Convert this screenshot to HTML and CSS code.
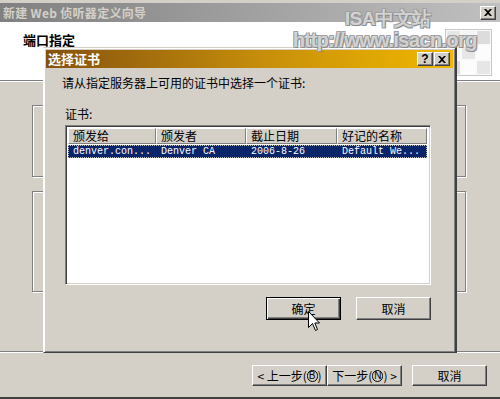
FILE: index.html
```html
<!DOCTYPE html>
<html>
<head>
<meta charset="utf-8">
<link rel="stylesheet" href="styles.css">
</head>
<body>
<div class="window">
  <div class="titlebar">
    <span class="title-text">新建 Web 侦听器定义向导</span>
    <span class="tbtn tbtn-x">
      <svg width="8" height="7" viewBox="0 0 8 7"><path d="M0 0h2l2 2 2-2h2L5 3.5 8 7H6L4 5 2 7H0l3-3.5z" fill="#000"/></svg>
    </span>
  </div>
  <div class="header">
    <div class="header-title">端口指定</div>
    <div class="header-icon">
      <div class="cell c1"></div><div class="cell c2"></div><div class="cell c3"></div>
      <div class="cell c2"></div><div class="cell c1"></div><div class="cell c4"></div>
      <div class="cell c3"></div><div class="cell c4"></div><div class="cell c1"></div>
    </div>
  </div>
  <div class="body">
    <div class="group g1"></div>
    <div class="group g2"></div>
  </div>
  <div class="separator"></div>
  <div class="footer">
    <div class="btn btn-nav">&lt;&nbsp;上一步(<u>B</u>)</div>
    <div class="btn btn-nav">下一步(<u>N</u>)&nbsp;&gt;</div>
    <div class="btn btn-cancel">取消</div>
  </div>

  <div class="watermark">
    <div class="wm1">ISA中文站</div>
    <div class="wm2">http://www.isacn.org</div>
  </div>

  <div class="dialog">
    <div class="dtitle">
      <span class="dtitle-text">选择证书</span>
      <span class="dbtns">
        <span class="tbtn tbtn-q">?</span>
        <span class="tbtn">
          <svg width="8" height="7" viewBox="0 0 8 7"><path d="M0 0h2l2 2 2-2h2L5 3.5 8 7H6L4 5 2 7H0l3-3.5z" fill="#000"/></svg>
        </span>
      </span>
    </div>
    <div class="dbody">
      <div class="prompt">请从指定服务器上可用的证书中选择一个证书:</div>
      <div class="label">证书:</div>
      <div class="listview">
        <div class="lv-head">
          <div class="col col1">颁发给</div>
          <div class="col col2">颁发者</div>
          <div class="col col3">截止日期</div>
          <div class="col col4">好记的名称</div>
        </div>
        <div class="lv-row">
          <div class="cell1">denver.con...</div>
          <div class="cell2">Denver CA</div>
          <div class="cell3">2006-8-26</div>
          <div class="cell4">Default We...</div>
        </div>
      </div>
      <div class="dbuttons">
        <div class="btn btn-default"><span>确定</span></div>
        <div class="btn btn-dlg">取消</div>
      </div>
    </div>
  </div>

  <svg class="cursor" width="13" height="21" viewBox="0 0 13 21">
    <path d="M0.5 0.5V16.5L4.5 12.5L7.5 19.5L9.5 18.5L6.8 12H11.5Z" fill="#fff" stroke="#000" stroke-width="1"/>
  </svg>
</div>
</body>
</html>
```

FILE: styles.css
```css
* { box-sizing: border-box; }
html, body { margin: 0; padding: 0; }
body {
  width: 500px;
  height: 399px;
  overflow: hidden;
  background: #d4d0c8;
  font-family: "Noto Sans CJK SC", "Liberation Sans", sans-serif;
  font-size: 12px;
  color: #000;
}
.window {
  position: relative;
  width: 500px;
  height: 399px;
  padding-top: 3px;
  display: flex;
  flex-direction: column;
  border-bottom: 2px solid #404040;
}
.titlebar {
  height: 19px;
  background: linear-gradient(to right, #808080, #c0c0c0);
  display: flex;
  align-items: center;
  justify-content: space-between;
  padding: 0 4px 0 3px;
}
.title-text {
  color: #d4d0c8;
  font-weight: bold;
  font-size: 12px;
  line-height: 14px;
  letter-spacing: 0.3px;
}
.tbtn {
  width: 16px;
  height: 14px;
  background: #d4d0c8;
  border-top: 1px solid #fff;
  border-left: 1px solid #fff;
  border-right: 1px solid #404040;
  border-bottom: 1px solid #404040;
  box-shadow: inset -1px -1px #808080;
  display: flex;
  align-items: center;
  justify-content: center;
  font-family: "Liberation Sans", sans-serif;
  font-weight: bold;
  font-size: 11px;
  line-height: 1;
}
.header {
  height: 59px;
  background: #fff;
  border-bottom: 1px solid #808080;
  box-shadow: 0 1px 0 #fff;
  display: flex;
  justify-content: space-between;
  padding: 10px 8px 0 23px;
}
.header-title {
  font-weight: bold;
  font-size: 13px;
  line-height: 16px;
}
.header-icon {
  width: 47px;
  height: 47px;
  margin-top: -3px;
  display: grid;
  grid-template-columns: repeat(3, 1fr);
  border: 1px solid #c8c8c8;
  background: #f0f0f0;
}
.header-icon .cell { border: 1px solid #fafafa; }
.c1 { background: #e6e6e6; }
.c2 { background: #f4f4f4; }
.c3 { background: #dcdcdc; }
.c4 { background: #fcfcfc; }
.body {
  height: 270px;
  padding: 24px 0 0 32px;
  display: flex;
  flex-direction: column;
  gap: 14px;
}
.group {
  width: 434px;
  border: 1px solid #808080;
  box-shadow: 1px 1px 0 #fff, inset 1px 1px 0 #fff;
}
.g1 { height: 72px; }
.g2 { height: 101px; }
.separator {
  height: 2px;
  border-top: 1px solid #808080;
  border-bottom: 1px solid #fff;
}
.footer {
  display: flex;
  justify-content: flex-end;
  padding: 12px 13px 0 0;
}
.btn {
  height: 21px;
  background: #d4d0c8;
  border-top: 1px solid #fff;
  border-left: 1px solid #fff;
  border-right: 1px solid #404040;
  border-bottom: 1px solid #404040;
  box-shadow: inset -1px -1px #808080;
  display: flex;
  align-items: center;
  justify-content: center;
  font-size: 12px;
  line-height: 14px;
}
.btn u {
  text-decoration: none;
  font-family: "Liberation Sans", sans-serif;
  font-size: 10px;
  border: 1px solid #000;
  border-radius: 6px;
  padding: 0 1px;
  line-height: 10px;
}
.btn-nav { width: 75px; }
.btn-cancel { width: 75px; margin-left: 10px; }

.watermark {
  position: absolute;
  left: 293px;
  top: 9px;
  width: 184px;
  color: rgba(255,255,255,0.6);
  text-shadow: 1px 1px 0 #8a8a8a, -1px -1px 0 #a0a0a0, 1px -1px 0 #a0a0a0, -1px 1px 0 #a0a0a0;
  font-family: "Liberation Sans", sans-serif;
  z-index: 3;
}
.wm1 { font-size: 19px; line-height: 20px; font-weight: bold; margin-left: 52px; letter-spacing: -0.5px; }
.wm2 { font-size: 20px; line-height: 22px; font-weight: bold; letter-spacing: -0.6px; }

.dialog {
  position: absolute;
  left: 43px;
  top: 47px;
  width: 414px;
  height: 306px;
  background: #d4d0c8;
  border-top: 1px solid #d4d0c8;
  border-left: 1px solid #fff;
  border-right: 2px solid #404040;
  border-bottom: 1px solid #404040;
  box-shadow: inset 1px 1px #fff, inset -1px -1px #808080;
  padding: 2px 2px 0 2px;
  z-index: 2;
}
.dtitle {
  height: 18px;
  background: linear-gradient(to right, #85520e, #c8900a 55%, #f0b800);
  display: flex;
  align-items: center;
  justify-content: space-between;
  padding: 0 3px 0 2px;
}
.dtitle-text {
  color: #fff;
  font-weight: bold;
  font-size: 13px;
  line-height: 16px;
}
.dbtns { display: flex; gap: 1px; }
.tbtn-q { font-size: 12px; }
.dbody {
  padding: 8px 0 0 16px;
}
.prompt { line-height: 14px; height: 14px; }
.label { margin-top: 17px; margin-left: 3px; line-height: 14px; height: 14px; }
.listview {
  margin-top: 4px;
  margin-left: 3px;
  width: 366px;
  height: 160px;
  background: #fff;
  border-top: 1px solid #808080;
  border-left: 1px solid #808080;
  border-right: 1px solid #fff;
  border-bottom: 1px solid #fff;
  box-shadow: inset 1px 1px #404040, inset -1px -1px #d4d0c8;
  padding: 2px;
}
.lv-head { display: flex; height: 16px; }
.col {
  background: #d4d0c8;
  border-top: 1px solid #fff;
  border-left: 1px solid #fff;
  border-right: 1px solid #808080;
  border-bottom: 1px solid #808080;
  padding-left: 4px;
  line-height: 14px;
  font-size: 12px;
  white-space: nowrap;
  overflow: hidden;
}
.col1 { width: 88px; }
.col2 { width: 90px; }
.col3 { width: 91px; }
.col4 { width: 90px; }
.lv-row {
  display: flex;
  height: 13px;
  margin-top: 1px;
  width: 359px;
  background: #0a246a;
  color: #fff;
  outline: 1px dotted #c0c0c0;
  outline-offset: -1px;
  font-family: "Liberation Mono", monospace;
  font-size: 10px;
  line-height: 13px;
  white-space: nowrap;
}
.lv-row > div { padding-left: 5px; overflow: hidden; }
.cell1 { width: 88px; }
.cell2 { width: 90px; }
.cell3 { width: 91px; }
.cell4 { width: 90px; }
.dbuttons {
  display: flex;
  justify-content: flex-end;
  gap: 15px;
  width: 369px;
  margin-top: 12px;
}
.btn-dlg { width: 75px; height: 23px; }
.btn-default {
  width: 75px;
  height: 23px;
  border: 1px solid #000;
  box-shadow: inset 1px 1px #fff, inset -1px -1px #404040, inset -2px -2px #808080;
}
.cursor {
  position: absolute;
  left: 308px;
  top: 311px;
  z-index: 5;
}
```
